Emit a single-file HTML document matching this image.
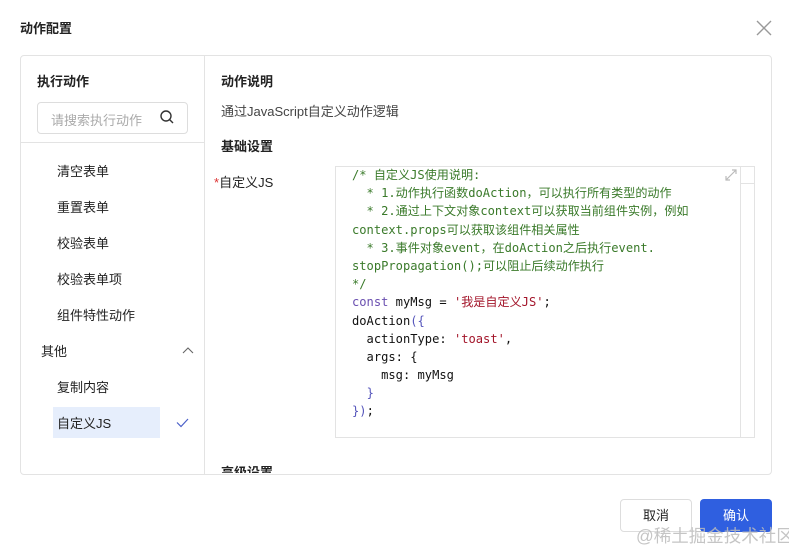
<!DOCTYPE html>
<html><head><meta charset="utf-8"><style>
body{margin:0;width:789px;height:548px;background:#fff;font-family:"Liberation Sans","Noto Sans CJK SC",sans-serif;color:#222;position:relative;overflow:hidden;font-size:13px}
.a{position:absolute;white-space:nowrap}
.b{font-weight:bold}
.code{position:absolute;left:352px;top:166px;font-family:"DejaVu Sans Mono","Noto Sans CJK SC",monospace;font-size:12.1px;line-height:18.2px;color:#111}
.code div{white-space:pre;height:18.2px}
.c{color:#3a7a2a}.k{color:#6a4fb0}.s{color:#a3152a}.p{color:#5555bb}
</style></head><body>
<div class="a b" style="left:20px;top:18px;font-size:13px">动作配置</div>
<svg class="a" style="left:756px;top:20px" width="16" height="16"><path d="M1 1L15 15M15 1L1 15" stroke="#999" stroke-width="1.4"/></svg>
<div class="a" style="left:20px;top:55px;width:750px;height:418px;border:1px solid #e3e3e3;border-radius:4px"></div>
<div class="a" style="left:204px;top:56px;width:1px;height:418px;background:#e3e3e3"></div>
<div class="a" style="left:21px;top:142px;width:183px;height:1px;background:#e3e3e3"></div>
<div class="a b" style="left:37px;top:71px">执行动作</div>
<div class="a" style="left:37px;top:102px;width:149px;height:30px;border:1px solid #ddd;border-radius:4px"></div>
<div class="a" style="left:51px;top:110px;color:#aaa">请搜索执行动作</div>
<svg class="a" style="left:159px;top:109px" width="16" height="16"><circle cx="7" cy="7" r="5" fill="none" stroke="#333" stroke-width="1.4"/><path d="M10.5 10.5L14 14" stroke="#333" stroke-width="1.4"/></svg>
<div class="a" style="left:57px;top:161px">清空表单</div>
<div class="a" style="left:57px;top:197px">重置表单</div>
<div class="a" style="left:57px;top:233px">校验表单</div>
<div class="a" style="left:57px;top:269px">校验表单项</div>
<div class="a" style="left:57px;top:305px">组件特性动作</div>
<div class="a" style="left:41px;top:341px">其他</div>
<svg class="a" style="left:182px;top:347px" width="12" height="8"><path d="M1 6L6 1L11 6" fill="none" stroke="#666" stroke-width="1.1"/></svg>
<div class="a" style="left:57px;top:377px">复制内容</div>
<div class="a" style="left:53px;top:407px;width:107px;height:31px;background:#e6eefc"></div>
<div class="a" style="left:57px;top:413px">自定义JS</div>
<svg class="a" style="left:176px;top:418px" width="13" height="10"><path d="M1 4.5L5 8.5L12 1" fill="none" stroke="#4a5fc8" stroke-width="1.2"/></svg>
<div class="a b" style="left:221px;top:71px">动作说明</div>
<div class="a" style="left:221px;top:101px;color:#444">通过JavaScript自定义动作逻辑</div>
<div class="a b" style="left:221px;top:136px">基础设置</div>
<div class="a" style="left:214px;top:172px"><span style="color:#d33">*</span>自定义JS</div>
<div class="a" style="left:335px;top:166px;width:418px;height:270px;border:1px solid #e3e3e3"></div>
<div class="a" style="left:740px;top:167px;width:1px;height:270px;background:#e3e3e3"></div>
<div class="a" style="left:741px;top:183px;width:13px;height:1px;background:#e3e3e3"></div>
<svg class="a" style="left:724px;top:168px" width="14" height="14"><path d="M2 12L12 2M8 2H12V6M2 8V12H6" fill="none" stroke="#bbb" stroke-width="1.2"/></svg>
<div class="code">
<div class="c">/* 自定义JS使用说明:</div>
<div class="c">  * 1.动作执行函数doAction，可以执行所有类型的动作</div>
<div class="c">  * 2.通过上下文对象context可以获取当前组件实例，例如</div>
<div class="c">context.props可以获取该组件相关属性</div>
<div class="c">  * 3.事件对象event，在doAction之后执行event.</div>
<div class="c">stopPropagation();可以阻止后续动作执行</div>
<div class="c">*/</div>
<div><span class="k">const</span> myMsg = <span class="s">'我是自定义JS'</span>;</div>
<div>doAction<span class="p">({</span></div>
<div>  actionType: <span class="s">'toast'</span>,</div>
<div>  args: {</div>
<div>    msg: myMsg</div>
<div>  <span class="p">}</span></div>
<div><span class="p">})</span>;</div>
</div>
<div class="a" style="left:205px;top:462px;width:565px;height:11px;overflow:hidden"><span class="b" style="position:absolute;left:16px;top:0px">高级设置</span></div>
<div class="a" style="left:620px;top:499px;width:70px;height:31px;border:1px solid #ddd;border-radius:4px;text-align:center;line-height:31px">取消</div>
<div class="a" style="left:700px;top:499px;width:72px;height:33px;background:#2f5fe0;border-radius:4px;color:#fff;text-align:center;line-height:33px">确认</div>
<div class="a" style="left:636px;top:523px;font-size:17.5px;color:#bbb;opacity:.85">@稀土掘金技术社区</div>
</body></html>
